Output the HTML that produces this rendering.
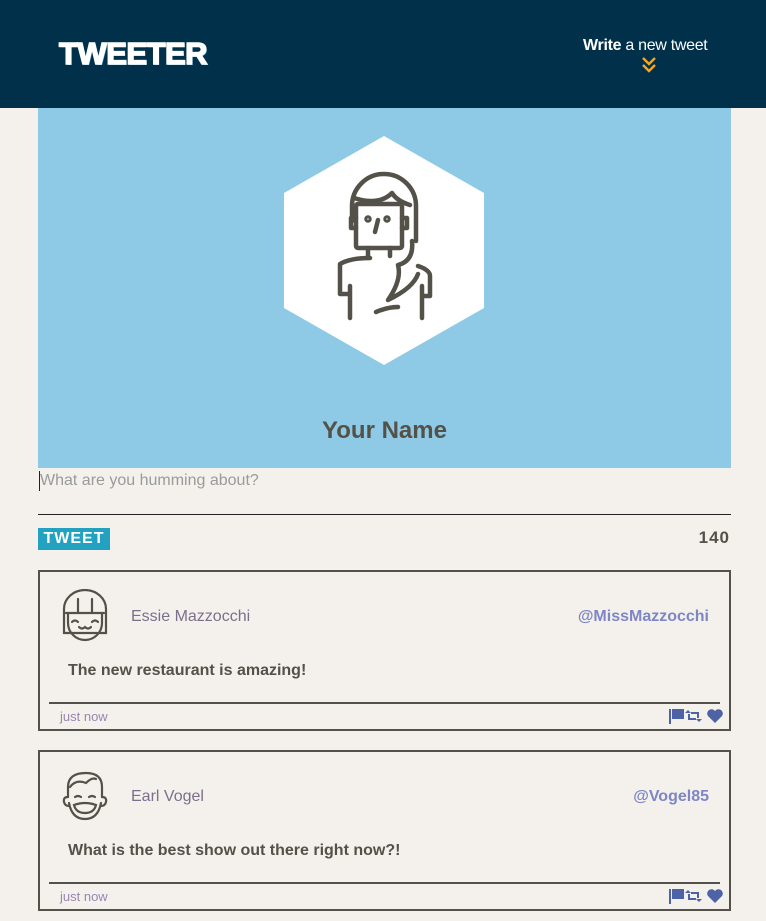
<!DOCTYPE html>
<html><head><meta charset="utf-8"><style>
*{box-sizing:border-box;margin:0;padding:0}
body{width:766px;height:921px;background:#f4f1ec;font-family:"Liberation Sans",sans-serif;color:#545149;overflow:hidden;position:relative}
header{position:absolute;left:0;top:0;width:766px;height:108px;background:#00304a}
.logo{position:absolute;left:59px;top:36px;font-size:31px;font-weight:900;color:#fff;letter-spacing:-0.5px;text-shadow:1px 1px 0 #4aa8d0;-webkit-text-stroke:1.5px #fff}
.write{position:absolute;left:583px;top:37px;color:#fff;font-size:16px;letter-spacing:-0.3px}
.write b{font-weight:700}
.chev{position:absolute;left:641px;top:56px}
.hero{position:absolute;left:38px;top:108px;width:693px;height:360px;background:#8ec9e6}
.name{position:absolute;left:0;width:693px;top:309px;text-align:center;font-size:24px;font-weight:700;color:#545149}
.ta{position:absolute;left:38px;top:468px;width:693px;height:47px;border-bottom:1.5px solid #222}
.ta span{position:absolute;left:2px;top:4px;font-size:16px;color:#9a9a9a;font-weight:300}
.ta i{position:absolute;left:1px;top:3px;width:1px;height:20px;background:#222}
.btn{position:absolute;left:38px;top:528px;width:72px;height:22px;background:#23a1c0;color:#fff;font-weight:900;font-size:16px;text-align:center;line-height:22px;letter-spacing:1px}
.cnt{position:absolute;right:36px;top:528px;font-weight:900;font-size:17px;color:#545149;letter-spacing:1px}
.tw{position:absolute;left:38px;width:693px;height:161px;border:2px solid #545149}
.tw .av{position:absolute;left:20px;top:17px}
.tw .nm{position:absolute;left:91px;top:36px;font-size:16px;color:#7d6f8c;font-weight:300}
.tw .hd{position:absolute;right:20px;top:36px;font-size:16px;color:#7e86c4;font-weight:700}
.tw .tx{position:absolute;left:28px;top:90px;font-size:16px;font-weight:700;color:#545149}
.tw .ln{position:absolute;left:9px;top:130px;width:671px;height:2px;background:#545149}
.tw .ago{position:absolute;left:20px;top:137px;font-size:13px;color:#9a86b0;font-weight:300}
.tw .ic{position:absolute;right:6px;top:136px}
</style></head><body>
<header><div class="logo">TWEETER</div>
<div class="write"><b>Write</b> a new tweet</div>
<svg class="chev" width="16" height="17" viewBox="0 0 16 17"><path d="M2 2l6 6 6-6M2 9l6 6 6-6" fill="none" stroke="#f5a623" stroke-width="2.4"/></svg>
</header>
<div class="hero">
<svg style="position:absolute;left:246px;top:28px" width="200" height="230" viewBox="0 0 200 230"><polygon points="100,0 200,57 200,172 100,229 0,172 0,57" fill="#fff"/>
<g fill="none" stroke="#545149" stroke-width="4.5" stroke-linecap="round" stroke-linejoin="round">
<path d="M68 85 v-15 a32 32 0 0 1 64 0 v35"/>
<path d="M70 62 q25 8 38 -5 q5 8 18 12"/>
<rect x="72" y="68" width="46" height="44" rx="2"/>
<path d="M72 82 h-5 v10 h5 M118 82 h5 v10 h-5"/>
<circle cx="84" cy="83" r="1.5"/><circle cx="103" cy="83" r="1.5"/>
<path d="M94 84 l-3 12"/>
<path d="M84 112 v10 M106 112 v8"/>
<path d="M128 105 q2 20 -14 24 q4 15 -10 35 q25 -12 30 -26"/>
<path d="M86 122 q-20 0 -30 6 v30 h10 M66 150 v32 M134 130 q12 4 12 10 v20 h-8 M138 150 v32"/>
<path d="M92 176 q12 -5 22 -5"/>
</g></svg>
<div class="name">Your Name</div>
</div>
<div class="ta"><i></i><span>What are you humming about?</span></div>
<div class="btn">TWEET</div>
<div class="cnt">140</div>

<div class="tw" style="top:570px">
<svg class="av" width="50" height="54" viewBox="0 0 50 54"><g fill="none" stroke="#545149" stroke-width="2.2" stroke-linecap="round"><path d="M4 44 V20 a21 19 0 0 1 42 0 V44 Z"/><path d="M6 24 H44 M18 10 v14 M32 10 v14"/><path d="M8 24 v10 a17 17 0 0 0 34 0 v-10"/><path d="M12 33 q3 -3 6 0 M32 33 q3 -3 6 0"/><path d="M19 38 q3 3 6 0 q3 3 6 0"/></g></svg>
<div class="nm">Essie Mazzocchi</div><div class="hd">@MissMazzocchi</div>
<div class="tx">The new restaurant is amazing!</div>
<div class="ln"></div><div class="ago">just now</div>
<svg class="ic" width="54" height="16" viewBox="0 0 54 16"><g fill="#4e62a6"><rect x="0" y="1" width="2" height="15"/><path d="M3 1h12v10H3z"/><path d="M22 4h8v6h-2V6h-6z M19 2l3 3h-6z" /><path d="M27 12h-8V6h2v4h6z M30 14l-3-3h6z"/><path d="M46 15 l-7-7 a3.8 3.8 0 0 1 7 -5 a3.8 3.8 0 0 1 7 5z"/></g></svg>
</div>

<div class="tw" style="top:750px">
<svg class="av" width="50" height="54" viewBox="0 0 50 54"><g fill="none" stroke="#545149" stroke-width="2.2" stroke-linecap="round"><path d="M8 28 V18 q0-14 18-14 q16 0 16 14 v10"/><path d="M10 18 q6-8 16-4 q6-6 10 -4"/><path d="M8 28 q-5 0 -4 5 q1 4 5 4 M42 28 q5 0 4 5 q-1 4 -5 4"/><path d="M9 34 q3 16 16 16 q13 0 16 -16"/><path d="M15 28 q3 -2 6 0 M29 28 q3 -2 6 0"/><path d="M14 36 q11 -4 22 0 q-2 8 -11 8 q-9 0 -11 -8z"/></g></svg>
<div class="nm">Earl Vogel</div><div class="hd">@Vogel85</div>
<div class="tx">What is the best show out there right now?!</div>
<div class="ln"></div><div class="ago">just now</div>
<svg class="ic" width="54" height="16" viewBox="0 0 54 16"><g fill="#4e62a6"><rect x="0" y="1" width="2" height="15"/><path d="M3 1h12v10H3z"/><path d="M22 4h8v6h-2V6h-6z M19 2l3 3h-6z" /><path d="M27 12h-8V6h2v4h6z M30 14l-3-3h6z"/><path d="M46 15 l-7-7 a3.8 3.8 0 0 1 7 -5 a3.8 3.8 0 0 1 7 5z"/></g></svg>
</div>
</body></html>
